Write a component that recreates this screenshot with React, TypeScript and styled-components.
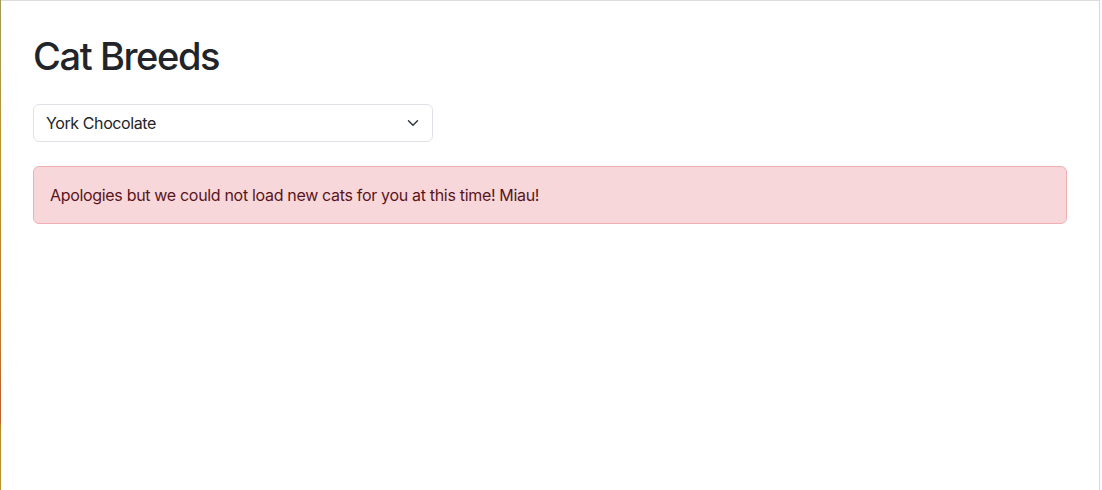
import React from "react";
import styled, { createGlobalStyle } from "styled-components";

const Global = createGlobalStyle`
  html, body { margin: 0; padding: 0; background: #fff; }
  body {
    font-family: Inter, "Liberation Sans", "Noto Sans", sans-serif;
    color: #212529;
    font-size: 16px;
    line-height: 1.5;
  }
  * { box-sizing: border-box; }
`;

const Frame = styled.div`
  display: flex;
  height: 490px;
  width: 1102px;
  overflow: hidden;
`;

const LeftEdge = styled.div`
  width: 1px;
  flex: none;
  background: linear-gradient(
    to bottom,
    #a39a5a 0%,
    #b8932e 30%,
    #bd7a2c 70%,
    #c0612a 80%,
    #c0612a 86%,
    #b98a2c 87%,
    #b8932e 100%
  );
`;

const Page = styled.div`
  flex: 1;
  border-top: 1px solid #dcdcdc;
  padding: 33px 32px 0 32px;
`;

const RightEdge = styled.div`
  width: 3px;
  flex: none;
  border-left: 1px solid #c7d7f6;
  background: #fbfcff;
`;

const Title = styled.h1`
  margin: 0 0 24px 0;
  font-size: 38px;
  font-weight: 540;
  line-height: 1.2;
  color: #212529;
  letter-spacing: -1.4px;
`;

const SelectWrap = styled.div`
  position: relative;
  width: 400px;
  margin-bottom: 24px;
`;

const Select = styled.select`
  display: block;
  width: 100%;
  height: 38px;
  padding: 6px 36px 6px 12px;
  font-family: inherit;
  font-size: 16px;
  line-height: 1.5;
  letter-spacing: -0.4px;
  color: #212529;
  background: #fff;
  border: 1px solid #dee2e6;
  border-radius: 6px;
  appearance: none;
  -webkit-appearance: none;
  outline: none;
`;

const Chevron = styled.svg`
  position: absolute;
  right: 12px;
  top: 50%;
  width: 16px;
  height: 12px;
  transform: translateY(-50%);
  pointer-events: none;
`;

const Alert = styled.div`
  padding: 16px;
  border: 1px solid #f1aeb5;
  border-radius: 6px;
  background: #f8d7da;
  color: #58151c;
  font-size: 16px;
  line-height: 24px;
  letter-spacing: -0.32px;
`;

export default function App() {
  return (
    <>
      <Global />
      <Frame>
        <LeftEdge />
        <Page>
          <Title>Cat Breeds</Title>
          <SelectWrap>
            <Select defaultValue="york">
              <option value="york">York Chocolate</option>
            </Select>
            <Chevron viewBox="0 0 16 16">
              <path
                d="M2 5l6 6 6-6"
                fill="none"
                stroke="#343a40"
                strokeWidth="2"
                strokeLinecap="round"
                strokeLinejoin="round"
              />
            </Chevron>
          </SelectWrap>
          <Alert>Apologies but we could not load new cats for you at this time! Miau!</Alert>
        </Page>
        <RightEdge />
      </Frame>
    </>
  );
}
